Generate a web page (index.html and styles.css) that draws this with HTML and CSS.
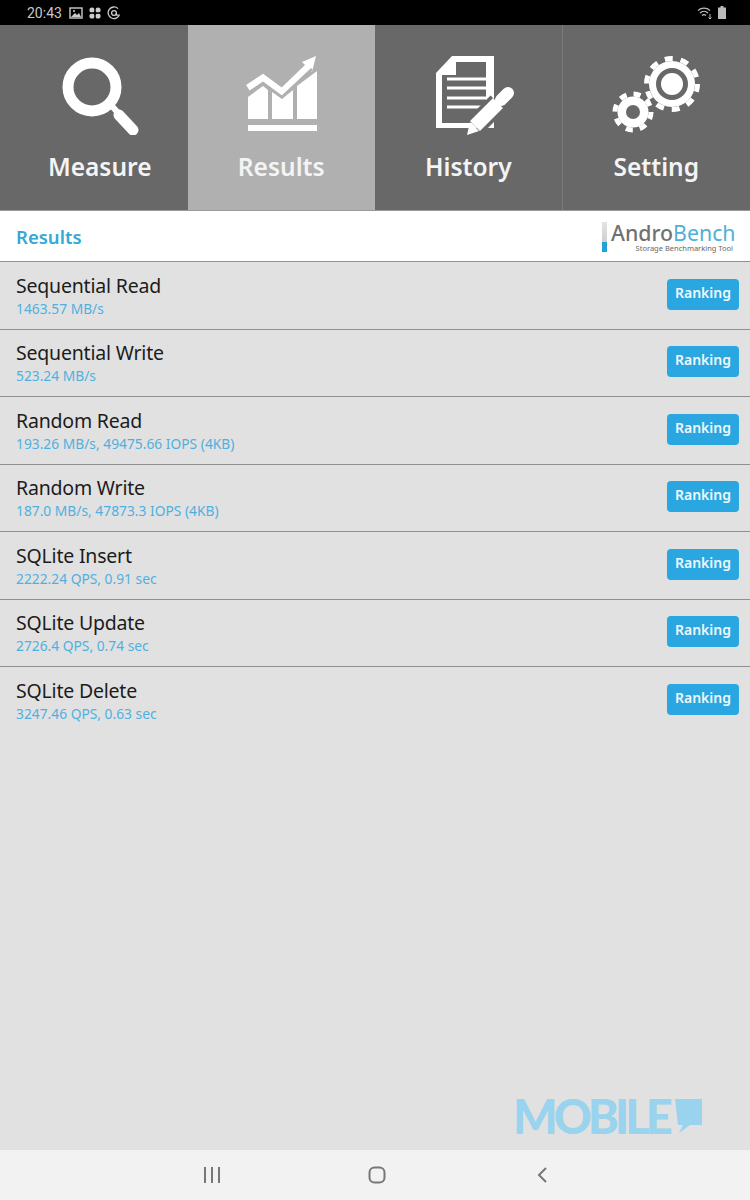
FILE: index.html
```html
<!DOCTYPE html>
<html lang="en">
<head>
    <meta charset="UTF-8">
    <meta name="viewport" content="width=device-width, initial-scale=1.0">
    <title>AndroBench - Results</title>
    <link rel="stylesheet" href="styles.css">
</head>
<body>
    <div class="screen">
        <!-- Status bar -->
        <div class="status-bar">
            <div class="status-left">
                <span class="clock">20:43</span>
                <svg width="14" height="12" viewBox="0 0 14 12"><rect x="1" y="1" width="12" height="10" fill="none" stroke="#ccc" stroke-width="1.4"/><path d="M2 10 6 6l2 2 2-2 2 4z" fill="#ccc"/><circle cx="5" cy="4" r="1" fill="#ccc"/></svg>
                <svg width="14" height="14" viewBox="0 0 14 14"><g fill="#ccc"><circle cx="4" cy="4" r="2.6"/><circle cx="10" cy="4" r="2.6"/><circle cx="4" cy="10" r="2.6"/><circle cx="10" cy="10" r="2.6"/></g><path d="M7 0v14M0 7h14" stroke="#000" stroke-width="1"/></svg>
                <svg width="14" height="14" viewBox="0 0 14 14" fill="none" stroke="#ccc" stroke-width="1.3"><path d="M12.5 8.5A5.8 5.8 0 1 1 11 2.6"/><circle cx="7" cy="7" r="2.4"/><path d="M9.4 7v2.2h2"/></svg>
            </div>
            <div class="status-right">
                <svg width="16" height="14" viewBox="0 0 16 14" fill="none" stroke="#bbb" stroke-width="1.2"><path d="M1 4.5a9 9 0 0 1 12 0M3 7a6 6 0 0 1 8 0M5 9.5a3 3 0 0 1 4 0"/><path d="M13 8v5M11.5 11.5 13 13l1.500-1.500" stroke-width="1"/></svg>
                <svg width="8" height="13" viewBox="0 0 8 13"><path d="M2.500 0h3v1.500H8V13H0V1.500h2.500z" fill="#bbb"/></svg>
            </div>
        </div>

        <!-- Tabs -->
        <div class="tabs">
            <div class="tab first">
                <svg width="80" height="80" viewBox="0 0 80 80">
                    <circle cx="32" cy="32" r="24" fill="none" stroke="#fff" stroke-width="11"/>
                    <path d="M50 49 60 60" stroke="#fff" stroke-width="6"/>
                    <path d="M59 60 73 75" stroke="#fff" stroke-width="11" stroke-linecap="round"/>
                </svg>
                <div class="tab-label">Measure</div>
            </div>
            <div class="tab active">
                <svg width="80" height="80" viewBox="0 0 80 80">
                    <g fill="#fff">
                        <path d="M7 42 22 31l5 4v29H7z"/>
                        <path d="M31 37l10 7 11-9v29H31z"/>
                        <path d="M56 31l20-15v48H56z"/>
                        <rect x="7" y="70" width="69" height="6"/>
                        <path d="M71 17 75 1 61 7z"/>
                    </g>
                    <path d="M7 33 22 23l19 14 28-27" fill="none" stroke="#fff" stroke-width="7"/>
                    <path d="M7 38 22 28l19 14 30-28" fill="none" stroke="#b0b0b0" stroke-width="2.500"/>
                </svg>
                <div class="tab-label">Results</div>
            </div>
            <div class="tab">
                <svg width="96" height="80" viewBox="-8 0 96 80">
                    <path d="M24 1H66V73H8V18z" fill="#fff"/>
                    <path d="M28 7H58V68H14V20H28z" fill="#686868"/>
                    <path d="M19 24H58M19 33H58M19 43H58M19 52H58" stroke="#fff" stroke-width="3"/>
                    <path d="M47 71 70 48" stroke="#686868" stroke-width="21"/>
                    <path d="M47 71 70 48" stroke="#fff" stroke-width="14"/>
                    <path d="M39 80 42 67 51 76z" fill="#fff"/>
                    <path d="M73 45 80 38" stroke="#fff" stroke-width="12" stroke-linecap="round"/>
                </svg>
                <div class="tab-label">History</div>
            </div>
            <div class="tab">
                <svg width="96" height="80" viewBox="0 0 96 80">
                    <circle cx="64" cy="29" r="23" fill="#fff"/>
                    <circle cx="64" cy="29" r="25.500" fill="none" stroke="#fff" stroke-width="5" stroke-dasharray="8 8.020"/>
                    <circle cx="64" cy="29" r="13.500" fill="none" stroke="#686868" stroke-width="5"/>
                    <circle cx="25" cy="57" r="15.500" fill="#fff"/>
                    <circle cx="25" cy="57" r="18" fill="none" stroke="#fff" stroke-width="5" stroke-dasharray="7.070 7.070"/>
                    <circle cx="25" cy="57" r="7" fill="#686868"/>
                </svg>
                <div class="tab-label">Setting</div>
            </div>
        </div>

        <!-- Header with logo -->
        <div class="results-header">
            <div class="results-title">Results</div>
            <div class="logo">
                <div class="logo-bar"></div>
                <div class="logo-text">
                    <div class="logo-name"><span class="logo-andro">Andro</span>Bench</div>
                    <div class="logo-sub">Storage Benchmarking Tool</div>
                </div>
            </div>
        </div>

        <!-- Results list -->
        <div class="results-list">
            <div class="result-row">
                <div>
                    <div class="result-name">Sequential Read</div>
                    <div class="result-value">1463.57 MB/s</div>
                </div>
                <div class="ranking-btn">Ranking</div>
            </div>
            <div class="result-row">
                <div>
                    <div class="result-name">Sequential Write</div>
                    <div class="result-value">523.24 MB/s</div>
                </div>
                <div class="ranking-btn">Ranking</div>
            </div>
            <div class="result-row">
                <div>
                    <div class="result-name">Random Read</div>
                    <div class="result-value">193.26 MB/s, 49475.66 IOPS (4KB)</div>
                </div>
                <div class="ranking-btn">Ranking</div>
            </div>
            <div class="result-row">
                <div>
                    <div class="result-name">Random Write</div>
                    <div class="result-value">187.0 MB/s, 47873.3 IOPS (4KB)</div>
                </div>
                <div class="ranking-btn">Ranking</div>
            </div>
            <div class="result-row">
                <div>
                    <div class="result-name">SQLite Insert</div>
                    <div class="result-value">2222.24 QPS, 0.91 sec</div>
                </div>
                <div class="ranking-btn">Ranking</div>
            </div>
            <div class="result-row">
                <div>
                    <div class="result-name">SQLite Update</div>
                    <div class="result-value">2726.4 QPS, 0.74 sec</div>
                </div>
                <div class="ranking-btn">Ranking</div>
            </div>
            <div class="result-row last">
                <div>
                    <div class="result-name">SQLite Delete</div>
                    <div class="result-value">3247.46 QPS, 0.63 sec</div>
                </div>
                <div class="ranking-btn">Ranking</div>
            </div>
        </div>

        <!-- Watermark -->
        <div class="watermark">
            <span>MOBILE</span>
            <svg width="27" height="35" viewBox="0 0 27 35"><path d="M0 0H27V26H15L4 34l4-8H3z" fill="#99d3ee"/></svg>
        </div>

        <!-- Navigation bar -->
        <div class="nav-bar">
            <svg width="18" height="16" viewBox="0 0 18 16"><path d="M2 0v16M9 0v16M16 0v16" stroke="#777" stroke-width="2"/></svg>
            <svg class="nav-home" width="18" height="18" viewBox="0 0 18 18"><rect x="1.500" y="1.500" width="15" height="15" rx="5" fill="none" stroke="#777" stroke-width="2"/></svg>
            <svg width="12" height="16" viewBox="0 0 12 16"><path d="M10 1 3 8l7 7" fill="none" stroke="#777" stroke-width="2"/></svg>
        </div>
    </div>
</body>
</html>
```

FILE: styles.css
```css
* {
    box-sizing: border-box;
}
body {
    margin: 0;
    font-family: 'Noto Sans', 'Open Sans', sans-serif;
    background-color: #e1e1e1;
}
.screen {
    position: relative;
    display: flex;
    flex-direction: column;
    height: 1200px;
    overflow: hidden;
}
.status-bar {
    display: flex;
    justify-content: space-between;
    align-items: center;
    height: 25px;
    padding: 0 24px 0 27px;
    background-color: #000;
}
.status-left,
.status-right {
    display: flex;
    align-items: center;
    gap: 5px;
}
.clock {
    margin-right: 2px;
    font-family: 'Roboto', sans-serif;
    font-size: 14px;
    color: #c8c8c8;
}
.tabs {
    display: flex;
    height: 186px;
    border-bottom: 1px solid #999;
    background-color: #686868;
}
.tab {
    flex: 0 0 25%;
    display: flex;
    flex-direction: column;
    align-items: center;
    padding-top: 30px;
    border-right: 1px solid #7c7c7c;
    background-color: #686868;
}
.tab:last-child {
    border-right: none;
}
.tab.first {
    padding-left: 12px;
    border-right: none;
}
.tab.active {
    background-color: #b0b0b0;
    border-right: none;
}
.tab-label {
    margin-top: 15px;
    font-size: 24.500px;
    font-weight: 600;
    line-height: 34px;
    color: #f4f4f4;
}
.results-header {
    display: flex;
    justify-content: space-between;
    align-items: center;
    height: 51px;
    padding: 0 15px 0 16px;
    background-color: #fff;
    border-bottom: 1px solid #8f8f8f;
}
.results-title {
    font-size: 18.500px;
    font-weight: 600;
    color: #35a8d6;
}
.logo {
    display: flex;
    gap: 4px;
}
.logo-bar {
    width: 5px;
    height: 30px;
    margin-top: 1px;
    background: linear-gradient(#e4e4e4 0, #cfcfcf 66%, #22a3d3 66%);
}
.logo-text {
    width: 124px;
}
.logo-name {
    font-size: 21.300px;
    line-height: 23px;
    color: #4fb0d8;
}
.logo-andro {
    font-weight: 500;
    color: #707070;
}
.logo-sub {
    font-size: 7.500px;
    line-height: 8px;
    text-align: right;
    padding-right: 2px;
    color: #666;
}
.results-list {
    display: flex;
    flex-direction: column;
}
.result-row {
    display: flex;
    justify-content: space-between;
    align-items: center;
    height: 67.5px;
    padding: 0 11px 0 16px;
    border-bottom: 1px solid #8f8f8f;
}
.result-row.last {
    border-bottom: none;
}
.result-name {
    font-size: 19.500px;
    letter-spacing: -0.2px;
    line-height: 26px;
    color: #1c1c1c;
}
.result-value {
    margin-top: 1px;
    font-size: 13.800px;
    line-height: 18px;
    color: #4fb0e0;
}
.ranking-btn {
    width: 72px;
    height: 31px;
    margin-bottom: 2px;
    border-radius: 4px;
    font-size: 14px;
    font-weight: 600;
    line-height: 28px;
    text-align: center;
    color: #eef8fc;
    background-color: #2aa7e0;
}
/* sits over the empty list area, like the site's stamp on the photo */
.watermark {
    position: absolute;
    left: 513px;
    top: 1099px;
    display: flex;
    align-items: flex-start;
    gap: 6px;
    font-family: 'Lato', sans-serif;
    font-size: 47px;
    font-weight: 900;
    letter-spacing: -4px;
    line-height: 35px;
    color: #99d3ee;
}
.nav-bar {
    position: absolute;
    left: 0;
    right: 0;
    bottom: 0;
    display: flex;
    justify-content: space-between;
    align-items: center;
    height: 50px;
    padding: 0 202px 0 203px;
    background-color: #f2f2f2;
}
.nav-home {
    margin-right: 4px;
}
```
